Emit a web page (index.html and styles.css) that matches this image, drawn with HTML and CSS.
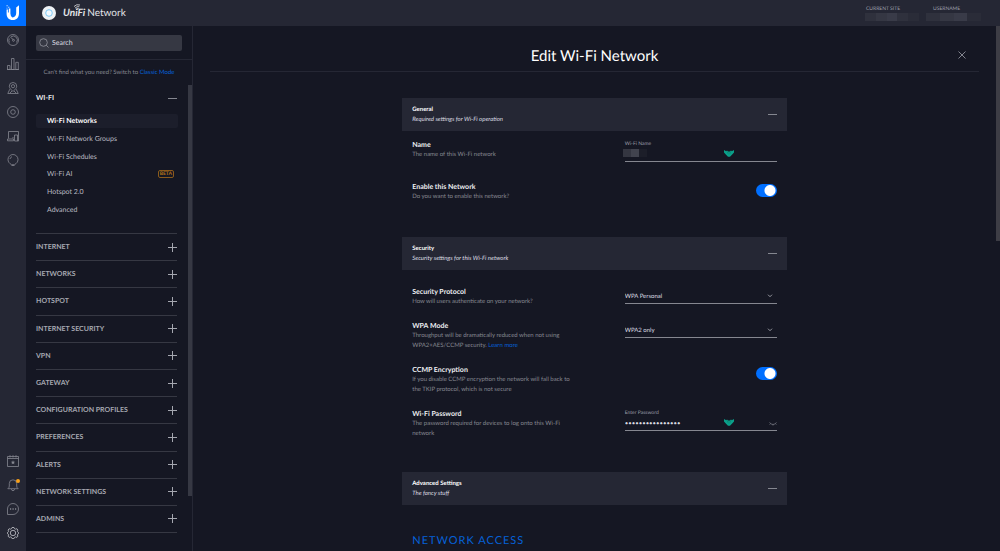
FILE: index.html
```html
<!DOCTYPE html>
<html lang="en">
<head>
<meta charset="utf-8">
<title>UniFi Network</title>
<link rel="stylesheet" href="styles.css">
</head>
<body>
<div class="app">
  <a class="brand" href="#" aria-label="Ubiquiti">
    <svg viewBox="0 0 26 26"><path d="M10.400 5v8.500q0 2.700 2 4q3.800-.8 3.800-4.500V7.500L19 5.200V13c0 4.500-2.300 7-6.200 7C8.700 20 6.600 17.500 6.600 13.500V9.500h1.300v3h.9V8.500h1.600z" fill="#fff"/><path d="M6.600 5.300h1v1h-1zM8.300 6.800h1v1h-1zM6.600 7.800h.8v.8h-.8z" fill="#fff"/></svg>
  </a>
  <header class="topbar">
    <div class="product">
      <svg class="device" viewBox="0 0 14 14"><circle cx="7" cy="7" r="7" fill="#eef1f4"/><circle cx="7" cy="7" r="3.300" fill="#f4faff" stroke="#72c4f5" stroke-width=".9"/></svg>
      <span class="unifi">UniFi<svg class="waves" viewBox="0 0 8 6"><path d="M1 2.500Q3.500-.2 7 1M2 4.200Q4 2 6.300 2.700M3 5.500Q4.300 4 5.700 4.400" fill="none" stroke="#e4e5e9" stroke-width=".8"/></svg></span>
      <span class="network">Network</span>
    </div>
    <dl class="session">
      <div><dt>CURRENT SITE</dt><dd class="mask site"><i></i><i></i><i></i><i></i><i></i></dd></div>
      <div><dt>USERNAME</dt><dd class="mask user"><i></i><i></i><i></i><i></i></dd></div>
    </dl>
  </header>

  <nav class="rail" aria-label="Main">
    <a href="#" aria-label="Dashboard"><svg viewBox="0 0 12 12"><circle cx="6" cy="6" r="5.500"/><path d="M2.500 8.500a4 4 0 0 1-.2-4M4 2.800a4 4 0 0 1 5.500 5.700M3.300 3.200l3.200 2.500"/><circle cx="6.500" cy="6.300" r="1"/></svg></a>
    <a href="#" aria-label="Statistics"><svg viewBox="0 0 12 12"><path d="M.5 11.500v-4h2.500v4zM4.500 11.500V.5H7v11zM8.800 11.500V4.300h2.500v7.200zM0 11.500h12"/></svg></a>
    <a href="#" aria-label="Map"><svg viewBox="0 0 12 12"><path d="M6 9.500C3.500 7 2.300 5.800 2.300 4.200a3.700 3.700 0 0 1 7.400 0C9.700 5.800 8.500 7 6 9.500zM2.800 7.200L.8 11.500h10.400l-2-4.300M3 11l2-2M9 11L7 9"/><circle cx="6" cy="4.200" r="1.600"/></svg></a>
    <a href="#" aria-label="Devices"><svg viewBox="0 0 12 12"><circle cx="6" cy="6" r="5.500"/><circle cx="6" cy="6" r="2.300"/></svg></a>
    <a href="#" aria-label="Clients"><svg viewBox="0 0 12 12"><path d="M1.500 8.500v-7h10v9.500H7.500M.5 9h6v1.800h-6zM7.500 11V5h3v6M6 8.500V7"/></svg></a>
    <a href="#" aria-label="Insights"><svg viewBox="0 0 12 12"><path d="M4.500 10.700C2.300 9.300 1 7.800 1 5.500a5 5 0 0 1 10 0c0 2.300-1.300 3.800-3.500 5.200zM4.500 11.500h3M3 5a3 3 0 0 1 2-2.300"/></svg></a>
    <span class="spacer"></span>
    <a href="#" aria-label="Events"><svg viewBox="0 0 12 12"><path d="M.5 1.500h11v10H.5zM.5 3.500h11M3 .2v2.300M6 .2v2.300M9 .2v2.300"/><path d="M6 5.300l.6 1.400 1.500.1-1.100 1 .3 1.500L6 8.500l-1.300.8.300-1.500-1.100-1 1.500-.1z" fill="#858790" stroke="none"/></svg></a>
    <a href="#" aria-label="Alerts"><svg viewBox="0 0 12 12"><path d="M.8 9.700h10.400Q9.700 8.800 9.700 7V4.500a3.700 3.700 0 0 0-7.400 0V7Q2.300 8.800.8 9.700zM4.500 10q0 1.700 1.500 1.700T7.500 10"/></svg><b class="dot"></b></a>
    <a href="#" aria-label="Chat"><svg viewBox="0 0 12 12"><path d="M.5 11.500V6A5.500 5.500 0 1 1 6 11.500z"/><path d="M3 6h1.200M5.500 6h1.200M8 6h1.200" stroke-width="1.300"/></svg></a>
    <a class="current" href="#" aria-label="Settings"><svg viewBox="0 0 12 12"><path d="M5 .5h2l.5 1.200 1.200.5L9.900 1.700l1 1.400-.5 1.200.6 1 .9.700-.9.800-.6 1.100.5 1.200-1 1.300-1.300-.5-1.100.5L7 11.600H5l-.5-1.200-1.100-.5-1.300.5-1-1.300.5-1.200L1 6.800.1 6 1 5.300l.6-1L1.100 3.100l1-1.400 1.200.5 1.200-.5z"/><circle cx="6" cy="6" r="2.700"/></svg></a>
  </nav>

  <aside class="sidebar">
    <div class="searchbar">
      <label class="search">
        <svg viewBox="0 0 10 10"><circle cx="4.500" cy="4.500" r="3.800"/><path d="M7.300 7.300L9.500 9.500"/></svg>
        <input type="search" placeholder="Search" aria-label="Search">
      </label>
    </div>
    <p class="hint">Can't find what you need? Switch to <a href="#">Classic Mode</a></p>
    <button class="group open" aria-expanded="true">WI-FI<span class="sign minus"></span></button>
    <ul class="subnav">
      <li><a class="active" href="#">Wi-Fi Networks</a></li>
      <li><a href="#">Wi-Fi Network Groups</a></li>
      <li><a href="#">Wi-Fi Schedules</a></li>
      <li><a href="#">Wi-Fi AI<span class="beta">BETA</span></a></li>
      <li><a href="#">Hotspot 2.0</a></li>
      <li><a href="#">Advanced</a></li>
    </ul>
    <div class="groups">
      <button class="group">INTERNET<span class="sign plus"></span></button>
      <button class="group">NETWORKS<span class="sign plus"></span></button>
      <button class="group">HOTSPOT<span class="sign plus"></span></button>
      <button class="group">INTERNET SECURITY<span class="sign plus"></span></button>
      <button class="group">VPN<span class="sign plus"></span></button>
      <button class="group">GATEWAY<span class="sign plus"></span></button>
      <button class="group">CONFIGURATION PROFILES<span class="sign plus"></span></button>
      <button class="group">PREFERENCES<span class="sign plus"></span></button>
      <button class="group">ALERTS<span class="sign plus"></span></button>
      <button class="group">NETWORK SETTINGS<span class="sign plus"></span></button>
      <button class="group">ADMINS<span class="sign plus"></span></button>
    </div>
    <span class="thumb"></span>
  </aside>

  <main class="main">
    <div class="titlebar">
      <h1>Edit Wi-Fi Network</h1>
      <button class="close" aria-label="Close"><svg viewBox="0 0 8 8"><path d="M.5.5l7 7M7.500.5l-7 7"/></svg></button>
    </div>
    <form class="form">
      <section>
        <div class="head"><div><h2>General</h2><p>Required settings for Wi-Fi operation</p></div><button type="button" class="sign minus" aria-label="Collapse General"></button></div>
        <div class="rows near">
          <div class="row">
            <div class="info"><h3>Name</h3><p>The name of this Wi-Fi network</p></div>
            <div class="field">
              <label for="ssid">Wi-Fi Name</label>
              <div class="control"><span class="mask name"><i></i><i></i><i></i></span><input id="ssid" type="text">
                <svg class="fox" viewBox="0 0 10 7"><path d="M0 0l2.200 1.200L3 .6l1.200.8h1.600L7 .6l.8.600L10 0v2.600L8.200 4.500 6 6.800H4L1.800 4.500 0 2.600z"/><path d="M3.500 1.500v2M5 2v2.500M6.500 1.500v2" stroke="#08705f" stroke-width=".4"/></svg></div>
            </div>
          </div>
          <div class="row">
            <div class="info"><h3 id="en">Enable this Network</h3><p>Do you want to enable this network?</p></div>
            <input class="toggle" type="checkbox" aria-labelledby="en" checked>
          </div>
        </div>
      </section>
      <section>
        <div class="head"><div><h2>Security</h2><p>Security settings for this Wi-Fi network</p></div><button type="button" class="sign minus" aria-label="Collapse Security"></button></div>
        <div class="rows">
          <div class="row">
            <div class="info"><h3><label for="protocol">Security Protocol</label></h3><p>How will users authenticate on your network?</p></div>
            <div class="pick"><select id="protocol"><option>WPA Personal</option></select><svg viewBox="0 0 6 4"><path d="M1 .7l2 2 2-2"/></svg></div>
          </div>
          <div class="row">
            <div class="info"><h3><label for="mode">WPA Mode</label></h3><p>Throughput will be dramatically reduced when not using WPA2+AES/CCMP security. <a href="#">Learn more</a></p></div>
            <div class="pick"><select id="mode"><option>WPA2 only</option></select><svg viewBox="0 0 6 4"><path d="M1 .7l2 2 2-2"/></svg></div>
          </div>
          <div class="row">
            <div class="info"><h3 id="ccmp">CCMP Encryption</h3><p>If you disable CCMP encryption the network will fall back to the TKIP protocol, which is not secure</p></div>
            <input class="toggle" type="checkbox" aria-labelledby="ccmp" checked>
          </div>
          <div class="row">
            <div class="info"><h3>Wi-Fi Password</h3><p>The password required for devices to log onto this Wi-Fi network</p></div>
            <div class="field">
              <label for="pass">Enter Password</label>
              <div class="control"><input id="pass" type="password" value="aaaaaaaaaaaaaaaa">
                <svg class="fox" viewBox="0 0 10 7"><path d="M0 0l2.200 1.200L3 .6l1.200.8h1.600L7 .6l.8.600L10 0v2.600L8.200 4.500 6 6.800H4L1.800 4.500 0 2.600z"/><path d="M3.500 1.500v2M5 2v2.500M6.500 1.500v2" stroke="#08705f" stroke-width=".4"/></svg>
                <svg class="eye" viewBox="0 0 8 4"><path d="M.5.5Q4 4.500 7.500.5M1.500 1.700l-.8.900M6.500 1.700l.8.900M4 2.500v1"/></svg></div>
            </div>
          </div>
        </div>
      </section>
      <section>
        <div class="head"><div><h2>Advanced Settings</h2><p>The fancy stuff</p></div><button type="button" class="sign minus" aria-label="Collapse Advanced Settings"></button></div>
        <h4 class="sub">NETWORK ACCESS</h4>
      </section>
    </form>
    <span class="thumb"></span>
  </main>
</div>
</body>
</html>
```
FILE: styles.css
```css
* { box-sizing: border-box; margin: 0; padding: 0; }
body { background: #151723; color: #dcdde2; font: 7px/10px Lato, "Open Sans", sans-serif; text-rendering: geometricPrecision; }
button, input, select { font: inherit; color: inherit; text-rendering: inherit; background: none; border: 0; outline: 0; appearance: none; }
a { color: #0561d8; text-decoration: none; }
ul { list-style: none; }
svg { display: block; }

.app { display: grid; grid-template: 26px 1fr / 26px 167px 1fr; height: 100vh; overflow: hidden; }
.brand { background: #006fff; }
.topbar { grid-column: 2 / 4; display: flex; justify-content: space-between; background: #252734; padding: 0 19px 0 16px; }
.product { display: flex; align-items: center; }
.device { width: 14px; height: 14px; margin-right: 7px; }
.unifi { position: relative; font: italic bold 10px/14px Lato, sans-serif; color: #e4e5e9; }
.waves { position: absolute; top: -2px; left: 10px; width: 8px; height: 6px; }
.network { margin-left: 2px; font-size: 10px; line-height: 14px; color: #e4e5e9; }
.session { display: flex; gap: 8px; padding-top: 5px; }
.session dt { padding-left: 1px; font-size: 5px; line-height: 8px; white-space: nowrap; color: #9c9ea8; }
.session > div { width: 54px; }
.session > div + div { padding-left: 5px; }
.session .user { margin-left: -6px; }

.mask { display: flex; height: 8px; }
.mask i { flex: 1; background: #2f313d; }
.mask i:nth-child(2) { background: #353743; }
.mask i:nth-child(3) { background: #393b48; }
.mask i:last-child { background: #2a2c38; }
.mask.name { width: 24px; flex: none; margin: 0 0 4px -2px; }
.mask.name i:nth-child(1) { background: #343641; }
.mask.name i:nth-child(2) { background: #41434e; }
.mask.name i:nth-child(3) { background: #1c1e29; }

.rail { display: flex; flex-direction: column; align-items: center; gap: 12px; padding: 8px 0 12px; background: #252734; }
.rail a { position: relative; }
.rail svg { width: 12px; height: 12px; fill: none; stroke: #858790; stroke-width: .8; }
.rail .current svg { stroke: #c4c5cc; }
.spacer { flex: 1; }
.dot { position: absolute; top: 0; right: -1px; width: 4px; height: 4px; border-radius: 50%; background: #f9a11b; }

.sidebar { position: relative; border-right: 1px solid #252734; overflow: hidden; }
.searchbar { padding: 9px 10px 8px; border-bottom: 1px solid #252734; }
.search { display: flex; align-items: center; gap: 3px; height: 16px; padding: 0 3px; border-radius: 2px; background: #363843; }
.search svg { width: 10px; height: 10px; fill: none; stroke: #a0a2ab; stroke-width: .7; }
.search input { flex: 1; min-width: 0; }
.search input::placeholder { color: #dcdde2; }
.hint { padding: 8px 0 11px; text-align: center; font-size: 6px; color: #858790; white-space: nowrap; }
.group { display: flex; align-items: center; justify-content: space-between; width: 100%; text-align: left; font-weight: bold; color: #a5a7b0; }
.group.open { width: auto; padding: 4px 0; margin: 0 15px 0 10px; min-width: 141px; color: #e6e7eb; }
.sign { flex: none; width: 9px; height: 9px; background: linear-gradient(#858790, #858790) center / 9px 1px no-repeat; }
.sign.plus { background: linear-gradient(#a5a7b0, #a5a7b0) center / 9px 1px no-repeat, linear-gradient(#a5a7b0, #a5a7b0) center / 1px 9px no-repeat; }
.subnav { display: flex; flex-direction: column; justify-content: space-between; height: 103px; margin: 7px 14px 16px 10px; }
.subnav a { display: flex; align-items: center; justify-content: space-between; height: 14px; padding: 0 4px 0 11px; border-radius: 2px; color: #b9bac2; }
.subnav .active { background: #1c1e2b; color: #fff; font-weight: bold; }
.beta { padding: 0 1px; border: 1px solid #8a5a1c; border-radius: 2px; font-size: 5px; line-height: 6px; font-weight: bold; color: #b87518; }
.groups { display: flex; flex-direction: column; height: 300px; margin: 0 15px 0 10px; border-bottom: 1px solid #363843; }
.groups .group { flex: 1; border-top: 1px solid #363843; }
.thumb { position: absolute; right: 0; width: 4px; background: #363843; }
.sidebar .thumb { top: 59px; height: 411px; }

.main { position: relative; overflow: hidden; padding: 0 21px 0 17px; }
.main .thumb { top: 0; height: 215px; background: #3d3d45; }
.titlebar { position: relative; display: flex; justify-content: center; padding: 20px 0 5px; border-bottom: 1px solid #252734; }
.titlebar h1 { font-size: 15px; line-height: 20px; font-weight: normal; color: #fff; }
.close { position: absolute; right: 13px; top: 25px; }
.close svg { width: 8px; height: 8px; stroke: #a0a2ab; stroke-width: .8; }
.form { display: flex; flex-direction: column; gap: 33px; width: 50%; margin: 26px auto 0; }
.head { display: flex; align-items: center; justify-content: space-between; height: 33px; padding: 0 10px; background: #252734; }
.head h2 { font-size: 6px; line-height: 10px; font-weight: bold; color: #fff; }
.head p { font-size: 6px; line-height: 10px; font-style: italic; color: #dcdde2; }
.rows { display: flex; flex-direction: column; gap: 14px; padding: 17px 10px 0; }
.rows.near { padding: 9px 10px 2px; }
.row { display: flex; justify-content: space-between; align-items: flex-start; }
.info { width: 160px; }
.info h3 { font-size: 7px; line-height: 10px; font-weight: bold; color: #eeeff2; }
.info p { font-size: 6px; line-height: 10px; color: #858790; }
.info a { display: inline-block; }
.field { width: 152px; padding-bottom: 6px; }
.field label { display: block; font-size: 5px; line-height: 8px; color: #9c9ea8; }
.control { position: relative; display: flex; align-items: center; height: 14px; border-bottom: 1px solid #858790; }
.control input { flex: 1; min-width: 0; font-size: 6px; }
.fox { position: absolute; right: 43px; top: 2px; width: 10px; height: 7px; fill: #0ba08a; }
.eye { width: 8px; height: 4px; fill: none; stroke: #858790; stroke-width: .7; }
.pick { position: relative; width: 152px; margin-top: 3px; border-bottom: 1px solid #858790; }
.pick select { display: block; width: 100%; height: 13px; font-size: 6px; }
.pick svg { position: absolute; right: 4px; top: 4px; width: 6px; height: 4px; fill: none; stroke: #b9bac2; stroke-width: .8; pointer-events: none; }
.toggle { width: 21px; height: 13px; margin-top: 2px; border-radius: 7px; background: radial-gradient(circle at 14px 50%, #fff 5px, #006fff 6px); }
.sub { padding: 29px 10px 0; font-size: 11px; line-height: 14px; font-weight: normal; letter-spacing: 1px; color: #0561d8; }
```
